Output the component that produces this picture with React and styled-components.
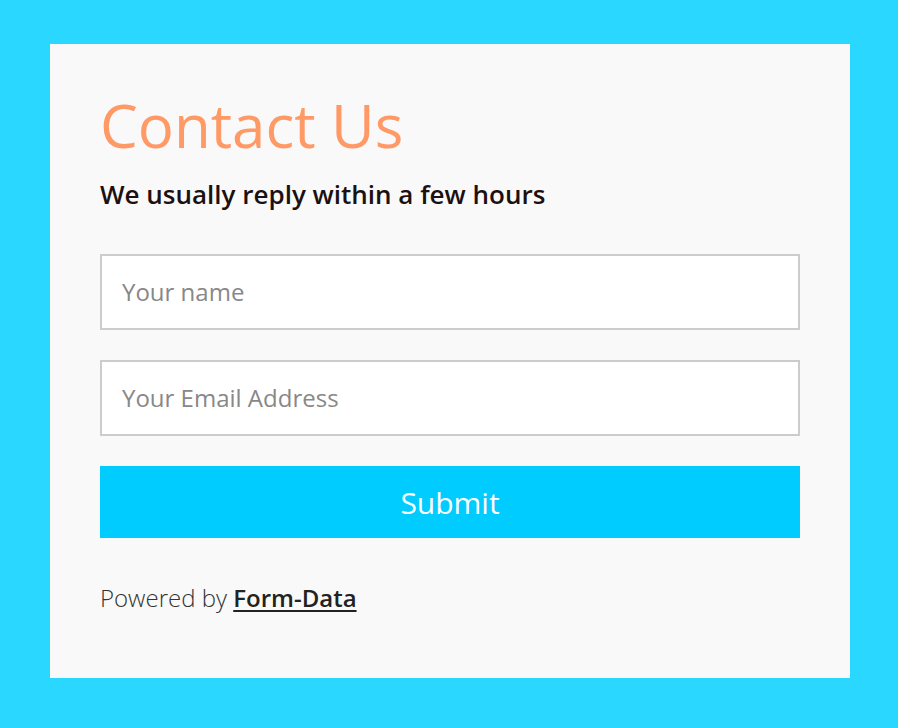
import React from "react";
import styled, {createGlobalStyle} from "styled-components";

const Global = createGlobalStyle`
body {
  margin: 0;
  background: #2ad8ff;
  font-family: "Open Sans", "DejaVu Sans", sans-serif;
}
`;

const Page = styled.div`
padding: 44px 48px 50px 50px;
`;
const Card = styled.div`
background: #f9f9f9;
width: 800px;
height: 634px;
box-sizing: border-box;
padding: 43px 50px 0;
display: flex;
flex-direction: column;
`;
const Title = styled.h1`
margin: 0;
font-size: 60px;
line-height: 76px;
font-weight: 400;
color: #ff9966;
`;
const Subtitle = styled.p`
margin: 15px 0 0;
font-size: 26px;
line-height: 32px;
font-weight: 600;
color: #1c1010;
`;
const Form = styled.form`
margin-top: 44px;
display: flex;
flex-direction: column;
gap: 30px;
`;
const Input = styled.input`
box-sizing: border-box;
width: 700px;
height: 76px;
border: 2px solid #cccccc;
background: #fff;
padding: 0 20px 2px;
font-family: inherit;
font-size: 24px;
color: #333;
outline: none;

&::placeholder {
  color: #888;
}
`;
const Button = styled.button`
width: 700px;
height: 72px;
border: 0;
background: #00ccff;
color: #fff;
font-family: inherit;
font-size: 30px;
font-weight: 400;
cursor: pointer;
`;
const Footer = styled.p`
margin: 44px 0 0;
font-size: 24px;
line-height: 32px;
font-weight: 300;
color: #333;
`;
const Link = styled.a`
color: #222;
font-weight: 600;
text-decoration: underline;
text-underline-offset: 3px;
`;

export default function App() {
  return (
    <Page>
      <Global/>
      <Card>
        <Title>Contact Us</Title>
        <Subtitle>We usually reply within a few hours</Subtitle>
        <Form onSubmit={e => e.preventDefault()}>
          <Input type="text" placeholder="Your name"/>
          <Input type="email" placeholder="Your Email Address"/>
          <Button type="submit">Submit</Button>
        </Form>
        <Footer>Powered by <Link href="#">Form-Data</Link></Footer>
      </Card>
    </Page>
  );
}
